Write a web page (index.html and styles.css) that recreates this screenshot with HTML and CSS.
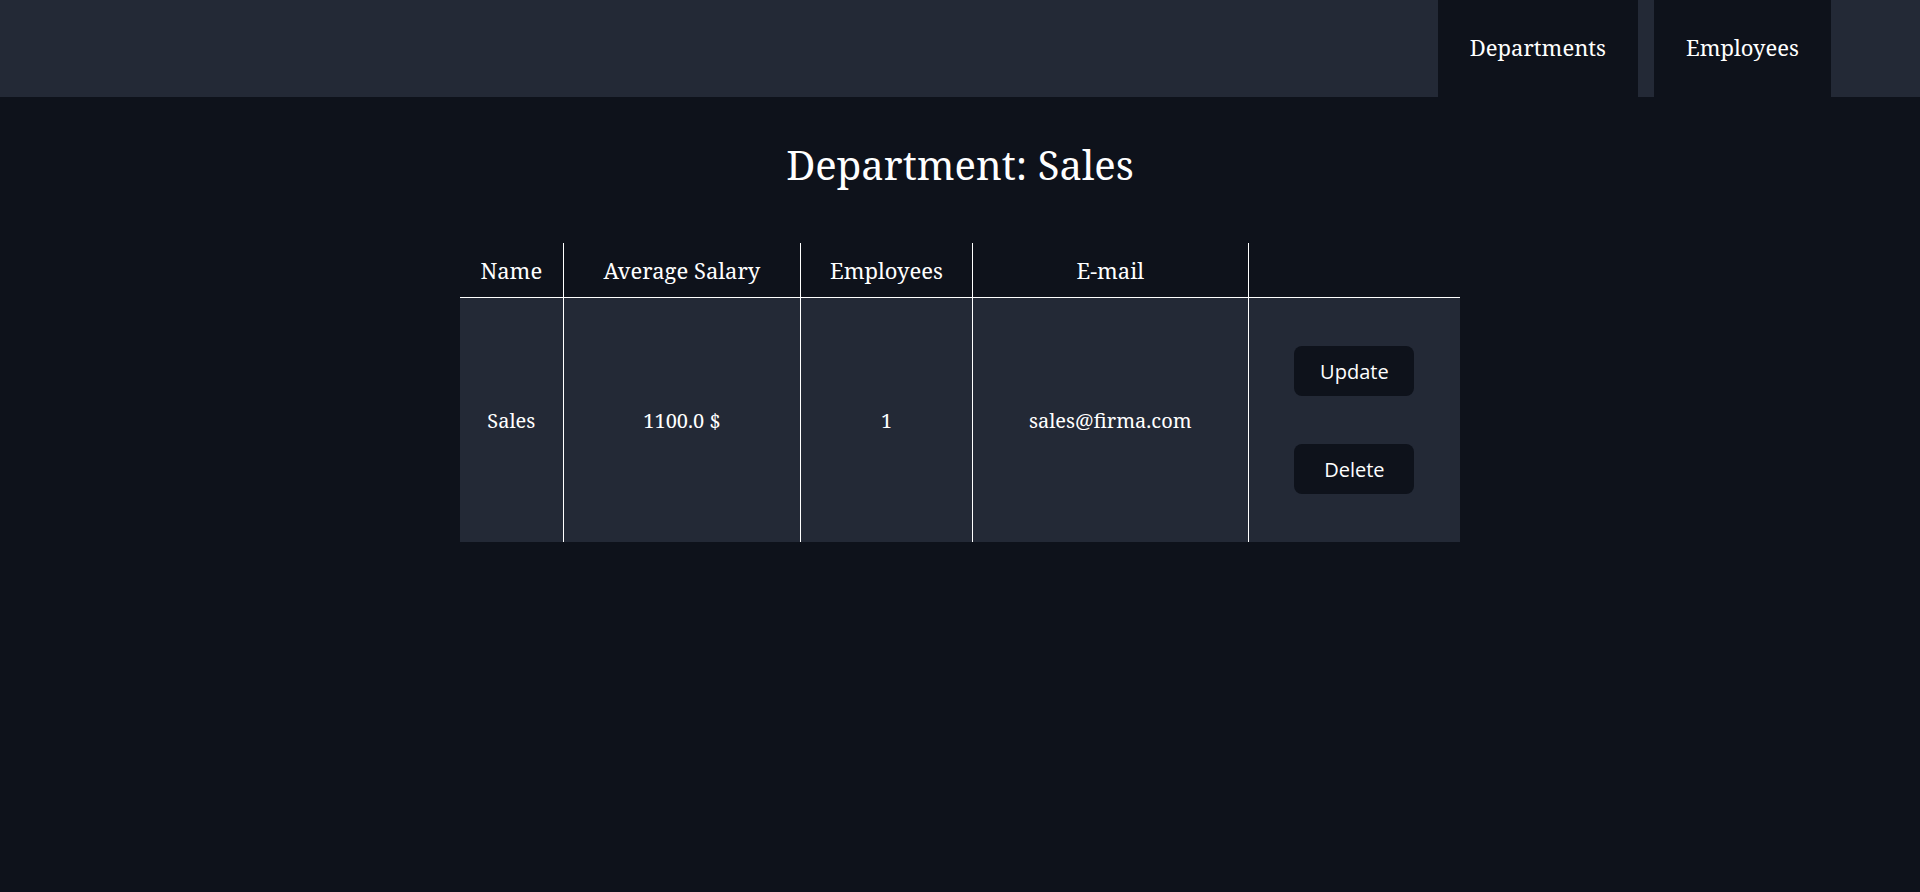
FILE: index.html
```html
<!DOCTYPE html>
<html lang="en">
<head>
<meta charset="utf-8">
<title>Department: Sales</title>
<link rel="stylesheet" href="styles.css">
</head>
<body>
<header class="topbar">
  <nav class="nav">
    <a class="nav-link" href="#">Departments</a>
    <a class="nav-link" href="#">Employees</a>
  </nav>
</header>
<main class="content">
  <h1 class="title">Department: Sales</h1>
  <table class="grid">
    <thead>
      <tr>
        <th class="c-name">Name</th>
        <th class="c-salary">Average Salary</th>
        <th class="c-emp">Employees</th>
        <th class="c-mail">E-mail</th>
        <th class="c-act"></th>
      </tr>
    </thead>
    <tbody>
      <tr>
        <td class="c-name">Sales</td>
        <td class="c-salary">1100.0 $</td>
        <td class="c-emp">1</td>
        <td class="c-mail">sales@firma.com</td>
        <td class="c-act">
          <div class="actions">
            <button class="btn">Update</button>
            <button class="btn">Delete</button>
          </div>
        </td>
      </tr>
    </tbody>
  </table>
</main>
</body>
</html>
```

FILE: styles.css
```css
html, body {
  margin: 0;
  padding: 0;
}
body {
  background: #0e121b;
  color: #ffffff;
  font-family: "Noto Serif", "DejaVu Serif", serif;
  min-height: 892px;
}
.topbar {
  background: #232936;
  height: 97px;
  display: flex;
  justify-content: flex-end;
  padding-right: 89px;
}
.nav {
  display: flex;
  gap: 16px;
  height: 100%;
}
.nav-link {
  display: flex;
  align-items: center;
  padding: 0 32px 4px;
  background: #0e121b;
  color: #ffffff;
  text-decoration: none;
  font-size: 22px;
}
.content {
  display: flex;
  flex-direction: column;
  align-items: center;
}
.title {
  font-size: 40px;
  font-weight: 400;
  margin: 40px 0 50px;
  line-height: 1.4;
}
.grid {
  border-collapse: collapse;
  width: 1000px;
}
.grid th {
  font-weight: 400;
  font-size: 22px;
  height: 54px;
  padding: 0;
  border-bottom: 1px solid #ffffff;
}
.grid td {
  background: #232936;
  font-size: 20px;
  text-align: center;
  height: 244px;
  padding: 0;
}
.grid th + th,
.grid td + td {
  border-left: 1px solid #ffffff;
}
.c-name { width: 103px; }
.c-salary { width: 238px; }
.c-emp { width: 171px; }
.c-mail { width: 276px; }
.c-act { width: 212px; }
.actions {
  display: flex;
  flex-direction: column;
  align-items: center;
  gap: 48px;
}
.btn {
  width: 120px;
  height: 50px;
  border: none;
  border-radius: 8px;
  background: #0e121b;
  color: #ffffff;
  font-family: "Open Sans", "Noto Sans", sans-serif;
  font-size: 20px;
}
```
